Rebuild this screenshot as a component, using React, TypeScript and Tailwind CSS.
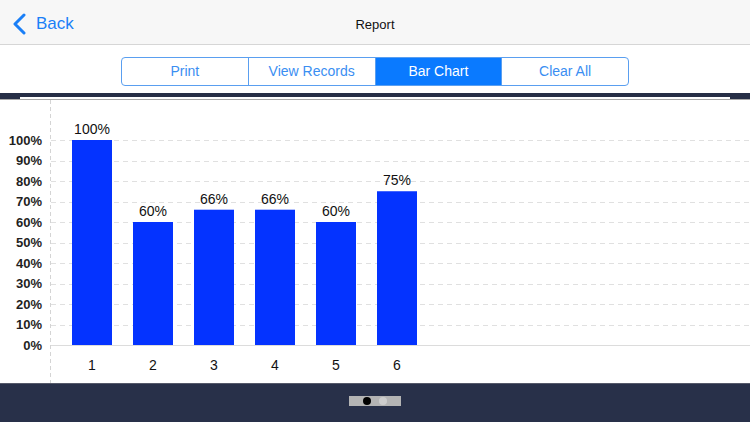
const tabs = ["Print", "View Records", "Bar Chart", "Clear All"];
const values = [100, 60, 66, 66, 60, 75];
const ticks = [100, 90, 80, 70, 60, 50, 40, 30, 20, 10, 0];

// chart geometry (svg coords, chart top = page y 100)
const zeroY = 245;
const unit = 2.05;
const yOf = (p: number) => zeroY - p * unit;

function BarChart() {
  return (
    <svg width={750} height={283} className="block" style={{ fontFamily: '"Liberation Sans", Arial, sans-serif' }}>
      <line x1={50.5} y1={0} x2={50.5} y2={283} stroke="#d4d4d4" strokeWidth={1} strokeDasharray="4 3" />
      {ticks.map((t) => (
        <g key={t}>
          {t === 0 ? (
            <line x1={51} y1={yOf(t) + 0.5} x2={750} y2={yOf(t) + 0.5} stroke="#dcdcdc" strokeWidth={1} />
          ) : (
            <line x1={51} y1={Math.round(yOf(t)) + 0.5} x2={750} y2={Math.round(yOf(t)) + 0.5} stroke="#e0e0e0" strokeWidth={1} strokeDasharray="5 4" />
          )}
          <text x={42} y={yOf(t) + 4.5} textAnchor="end" fontSize={13} fontWeight="bold" fill="#1f1f1f">
            {t}%
          </text>
        </g>
      ))}
      {values.map((v, i) => {
        const cx = 92 + i * 61;
        const top = yOf(v);
        return (
          <g key={i}>
            <rect x={cx - 20} y={top} width={40} height={zeroY - top} fill="#0433ff" />
            <text x={cx} y={top - 6} textAnchor="middle" fontSize={14} fill="#111">
              {v}%
            </text>
            <text x={cx} y={270} textAnchor="middle" fontSize={14} fill="#111">
              {i + 1}
            </text>
          </g>
        );
      })}
    </svg>
  );
}

export default function App() {
  return (
    <div className="w-[750px] h-[422px] overflow-hidden bg-white font-['Liberation_Sans',Arial,sans-serif]">
      <header className="relative flex h-[45px] items-center justify-center border-b border-[#d6d6d6] bg-[#f7f7f7]">
        <button className="absolute left-[12px] top-[11px] flex items-center gap-[9px] text-[17px] text-[#1a7ff7]">
          <svg width="15" height="22" viewBox="0 0 15 22" fill="none">
            <path d="M12 2 L3 11 L12 20" stroke="#1a7ff7" strokeWidth="3" strokeLinecap="round" strokeLinejoin="round" />
          </svg>
          <span>Back</span>
        </button>
        <h1 className="mt-[5px] text-[13px] text-[#111]">Report</h1>
      </header>

      <div className="flex h-[48px] justify-center pt-[12px]">
        <div className="flex h-[29px] w-[508px] overflow-hidden rounded-[4px] border border-[#5a9ff0]">
          {tabs.map((t, i) => (
            <div
              key={t}
              className={
                "flex flex-1 items-center justify-center text-[14px] " +
                (i > 0 ? "border-l border-[#5a9ff0] " : "") +
                (t === "Bar Chart" ? "bg-[#0a7aff] text-white" : "text-[#3a8ef2]")
              }
            >
              {t}
            </div>
          ))}
        </div>
      </div>

      <div className="h-[4px] bg-[#262e46]" />
      <div className="flex h-[2px]">
        <div className="w-[20px] bg-[#262e46]" />
        <div className="flex-1 bg-white" />
        <div className="w-[20px] bg-[#262e46]" />
      </div>
      <div className="h-[1px] bg-[#a8a8a8]" />

      <BarChart />

      <footer className="flex h-[39px] justify-center border-t border-[#55596a] bg-[#283049] pt-[12px]">
        <div className="flex h-[10px] w-[52px] items-center justify-center gap-[8px] bg-[#b4b4b4]">
          <span className="h-[8px] w-[8px] rounded-full bg-black" />
          <span className="h-[8px] w-[8px] rounded-full bg-[#cdcdcd]" />
        </div>
      </footer>
    </div>
  );
}
